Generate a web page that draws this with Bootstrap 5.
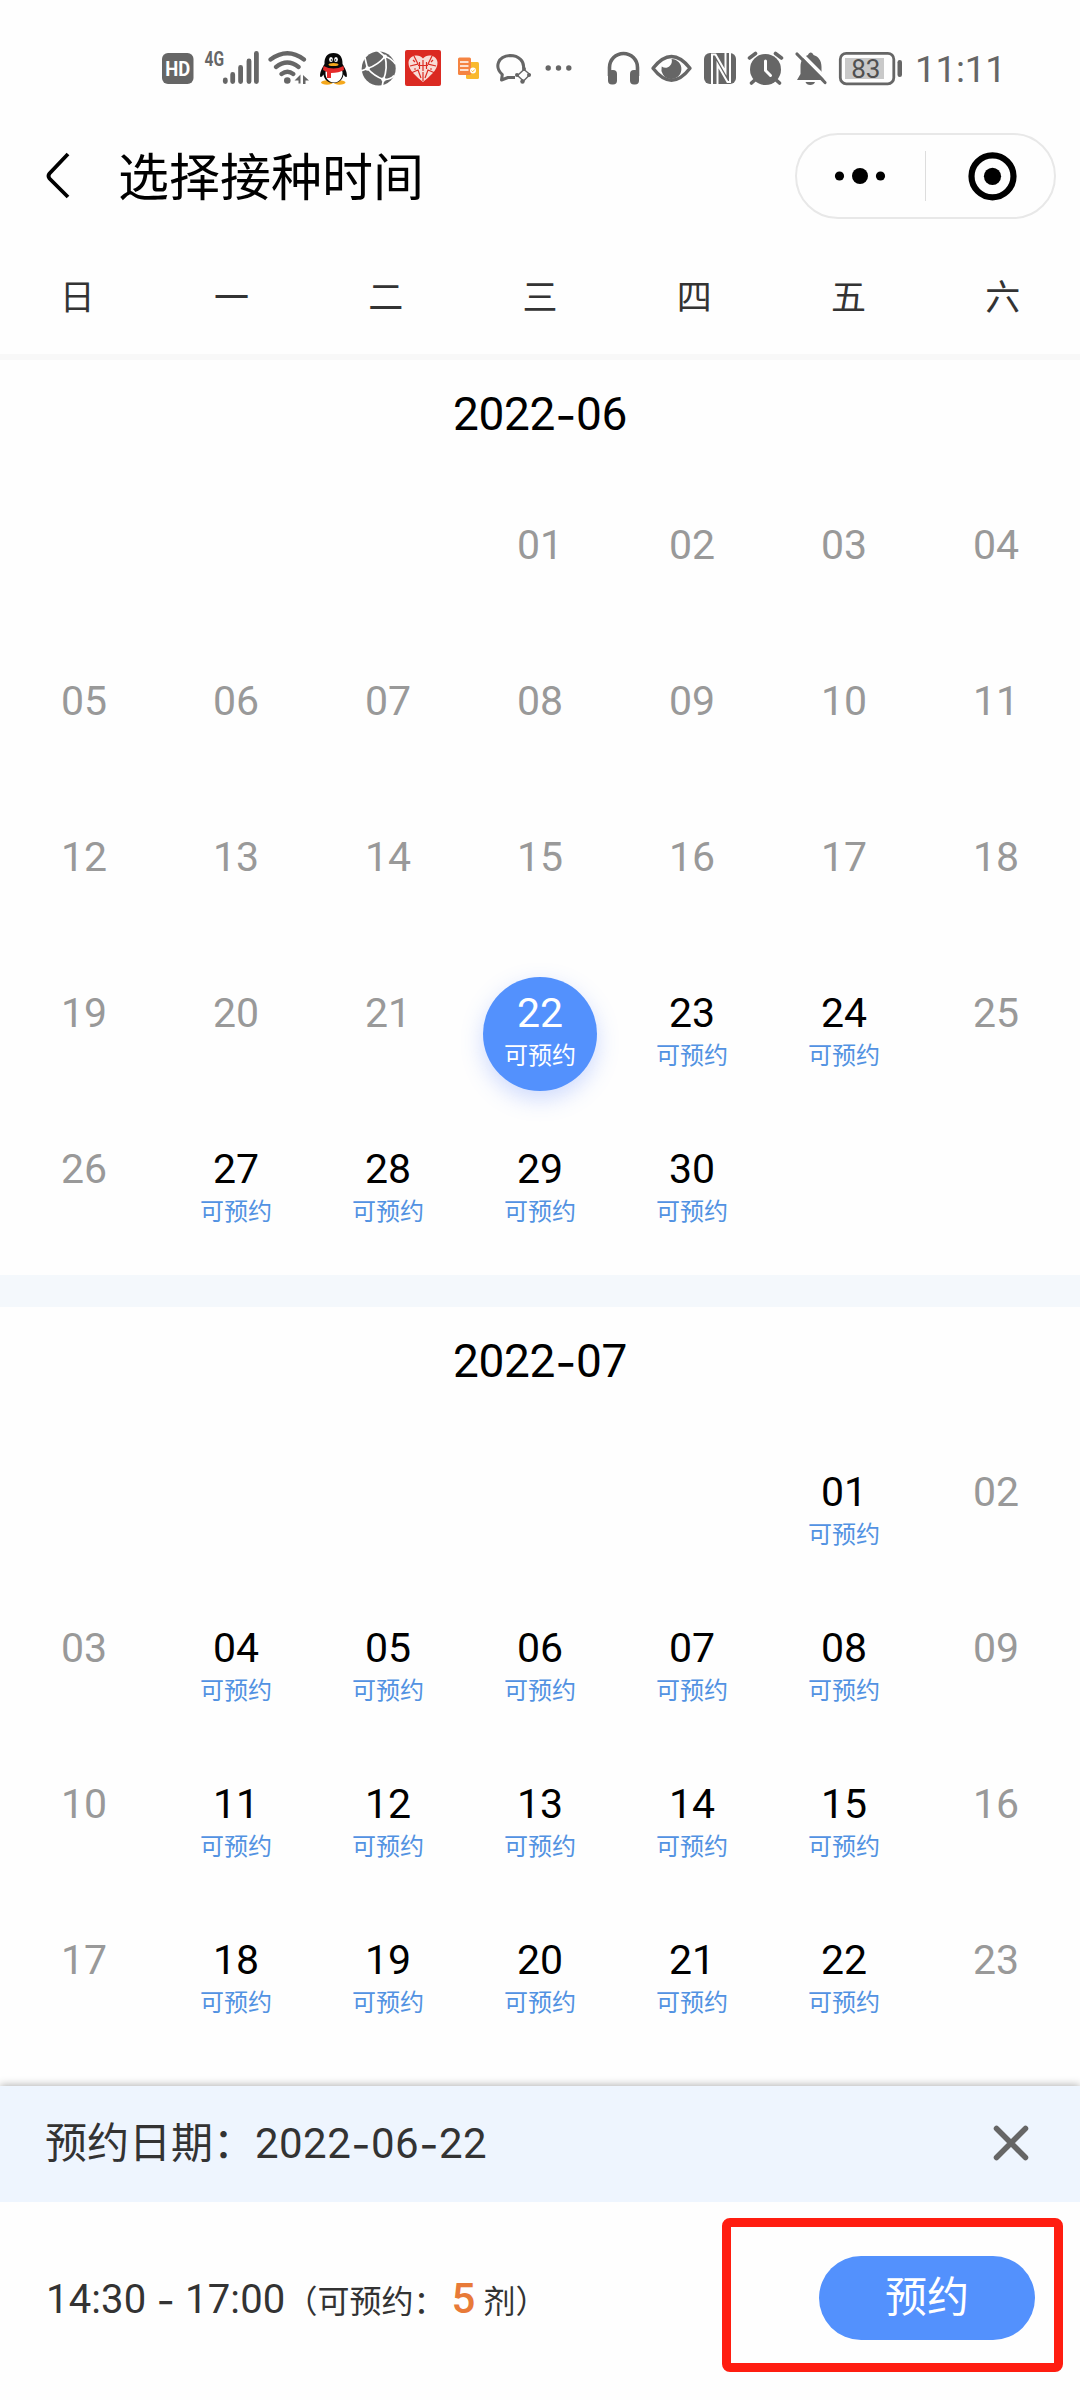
<!DOCTYPE html>
<html lang="zh-CN">
<head>
<meta charset="utf-8">
<meta name="viewport" content="width=device-width, initial-scale=1">
<title>选择接种时间</title>
<link href="https://cdn.jsdelivr.net/npm/bootstrap@5.3.0/dist/css/bootstrap.min.css" rel="stylesheet">
<style>
  body { font-family: Roboto, "Noto Sans CJK SC", sans-serif; color: #000; background: #fefefe; }
  .phone { width: 1080px; height: 2400px; }
  .status { height: 112px; padding: 48px 0 0 160px; color: #666; }
  .status svg { height: 40px; flex: none; }
  .clock { font-size: 37px; line-height: 44px; margin-left: 8px; letter-spacing: -.3px; }
  .titlebar { height: 128px; padding: 0 24px 0 45px; }
  .titlebar h1 { font-size: 51px; line-height: 76px; margin-left: 47px; padding-top: 5px; font-weight: 400; }
  .capsule { width: 261px; height: 86px; border: 2px solid #e8e8e8; border-radius: 43px; }
  .capsule .vr { width: 1px; height: 50px; min-height: 0; align-self: center; background: #ddd; opacity: 1; }
  .week { height: 114px; font-size: 35px; line-height: 117px; color: #333; }
  .seven { grid-template-columns: repeat(7, minmax(0, 1fr)); }
  .rule { height: 6px; background: #f8f8f8; }
  .month { padding: 0 8px 7px; }
  .month h2 { font-size: 46px; line-height: 107px; margin-bottom: 20px; font-weight: 400; letter-spacing: -.3px; }
  .dash { font-family: Inter, sans-serif; position: relative; top: 2px; }
  .gapband { height: 32px; background: #f4f8fc; }
  .day { height: 156px; padding-top: 21px; color: #999; }
  .disc { width: 114px; height: 114px; padding-top: 14px; border-radius: 50%; }
  .num { font-size: 41px; line-height: 44px; }
  .tag { font-size: 24px; line-height: 28px; margin-top: 7px; color: #5292e2; }
  .open { color: #000; }
  .chosen .disc { background: #5391fd; color: #fff; box-shadow: 0 8px 22px rgba(83,125,253,.28); }
  .chosen .tag { color: #fff; }
  .sheet { height: 314px; box-shadow: 0 -1px 8px rgba(0,0,0,.3); color: #333; background: #fefefe; }
  .sheet-head { height: 116px; background: #eef5fe; padding: 0 51px 2px 45px; font-size: 42px; }
  .date { letter-spacing: .45px; }
  .slot { height: 198px; padding: 0 45px 5px 46px; font-size: 40px; letter-spacing: .15px; }
  .note { font-size: 32px; letter-spacing: 0; }
  .left5 { font-size: 42px; font-weight: 500; color: #e87a38; margin: 0 8px 0 6px; }
  .btn-book { width: 216px; height: 84px; font-size: 42px; line-height: 78px; padding: 0; margin-top: -2px; background: #5391fd; color: #fff; border: 0; border-radius: 42px; letter-spacing: 0; }
  .callout { left: 722px; top: 132px; width: 341px; height: 154px; border: 9px solid #ff1d10; border-radius: 8px; pointer-events: none; }
</style>
</head>
<body>
<div class="phone d-flex flex-column overflow-hidden">

  <div class="status d-flex">
    <!-- HD voice -->
    <svg width="40" viewBox="160 48 40 40"><rect x="162" y="53" width="31.5" height="31" rx="6" fill="#666"/><text x="177.8" y="76" text-anchor="middle" font-size="21" font-weight="700" fill="#fff" textLength="25" lengthAdjust="spacingAndGlyphs">HD</text></svg>
    <!-- signal -->
    <svg width="65" viewBox="200 48 65 40"><text x="204.500" y="66" font-size="21" font-weight="700" fill="#666" textLength="19.500" lengthAdjust="spacingAndGlyphs">4G</text><g stroke="#666" stroke-width="4.8" stroke-linecap="round"><path d="M225.3 80v1.5M232.7 74.500v7M240.600 67.500v14M249 61v20.500M256.400 53.500v28"/></g></svg>
    <!-- wifi -->
    <svg width="50" viewBox="265 48 50 40"><g fill="none" stroke="#666" stroke-width="4.200" stroke-linecap="round"><path d="M270.500 59.500q17-12.500 33.500 0M276 67q11.300-9 22.600 0M281.500 74q6-4.500 11.800 0"/></g><circle cx="287.300" cy="80.500" r="3.300" fill="#666"/><path d="M294.500 80.500l6-6v9h-2v-3zM303 75l6 5.500h-3.500v3.500H303z" fill="#666"/></svg>
    <!-- penguin -->
    <svg width="40" viewBox="315 48 40 40"><ellipse cx="327" cy="82.500" rx="6" ry="2.200" fill="#f5a81c"/><ellipse cx="339.500" cy="82.500" rx="6" ry="2.200" fill="#f5a81c"/><path d="M333.500 53c-6.500 0-9.300 4.500-9 11-2.500 4-5 9-4.300 12.500.8 1.500 2.300-.5 3.300-2 .5 5 5 8.500 10 8.500s9.500-3.500 10-8.500c1 1.500 2.500 3.500 3.300 2 .7-3.500-1.800-8.500-4.300-12.500.3-6.500-2.500-11-9-11z" fill="#080808"/><path d="M326 70h16c2 6-2 12.500-8 12.500s-10-6-8-12.500z" fill="#fff"/><path d="M323.500 66q10 5 20 0l.5 4q-5 3-13 3v5h-4v-6l-4-2z" fill="#e52b2b"/><ellipse cx="331" cy="59.500" rx="1.900" ry="2.600" fill="#fff"/><ellipse cx="336" cy="59.500" rx="1.900" ry="2.600" fill="#fff"/><circle cx="331.500" cy="60" r=".8"/><circle cx="335.500" cy="60" r=".8"/><ellipse cx="333.500" cy="64.500" rx="5" ry="1.600" fill="#f5a81c"/></svg>
    <!-- globe -->
    <svg width="47" viewBox="355 48 47 40"><circle cx="378.700" cy="68.500" r="17" fill="#666"/><g fill="none" stroke="#fff" stroke-width="1.700"><path d="M367.500 68.500Q378 65 385 56.500M367.500 68.500Q374 76 383.500 79.500M385 56.500Q388 68 383.500 79.500M385 56.500L377 50M385 56.500Q391 58 395.500 64M383.500 79.500Q390 80 394 75.500M383.500 79.500L382 87M367.500 68.500L361 71M367.500 68.500L365 58"/></g><g fill="#fff"><circle cx="367.500" cy="68.500" r="2.200"/><circle cx="385" cy="56.500" r="2"/><circle cx="383.500" cy="79.500" r="2.200"/></g></svg>
    <!-- shopping app -->
    <svg width="50" viewBox="402 48 50 40"><rect x="405" y="50" width="36" height="36" rx="2" fill="#db2a22"/><path d="M423 58.500c4-5 14-3.500 14.500 4 .5 7.500-8.500 14.500-14.500 19.500-6-5-15-12-14.500-19.500.5-7.500 10.500-9 14.500-4z" fill="#f8dcd7"/><path d="M423 72v9M414 56l4 8-8 2M432 56l-4 8 8 2M411 73l7-3 3 8M435 73l-7-3-3 8M419.500 62v7M423 60v11M426.500 62v7M418 65.500h10M413 60l2 2M433 60l-2 2M414 69h2M430 69h2" fill="none" stroke="#db2a22" stroke-width="1.200"/></svg>
    <!-- documents -->
    <svg width="40" viewBox="452 48 40 40"><rect x="466" y="62" width="13" height="17" rx="1.500" fill="#f9b92e"/><rect x="458" y="57.500" width="13" height="17.500" rx="1.500" fill="#f58442"/><path d="M460 62h8.500M460 66h8.500M460 70h8.500" stroke="#fff" stroke-width="1.300"/><circle cx="473" cy="70.500" r="3" fill="#fff"/><path d="M471.500 70.500l1.200 1.300 2-2.300" stroke="#f9b92e" fill="none"/></svg>
    <!-- chat -->
    <svg width="48" viewBox="492 48 48 40"><path d="M515 77.500h-7l-6.500 2.500.8-5.500C494 67 498 56 510 55.500c9 0 14.500 6 13.500 13" fill="none" stroke="#666" stroke-width="3" stroke-linejoin="round"/><path d="M524 69.500l6 5-6.500 6.500-6-5.500z" fill="none" stroke="#666" stroke-width="1.400"/><g fill="#666"><circle cx="524" cy="69" r="2"/><circle cx="529" cy="75" r="2"/><circle cx="522.500" cy="81.500" r="2.200"/><circle cx="517" cy="75" r="2"/></g></svg>
    <!-- more -->
    <svg width="60" viewBox="540 48 60 40"><g fill="#666"><circle cx="548.200" cy="68" r="2.700"/><circle cx="558.500" cy="68" r="2.700"/><circle cx="568.800" cy="68" r="2.700"/></g></svg>
    <!-- headphones -->
    <svg width="45" viewBox="600 48 45 40"><path d="M609.500 76v-8.500a14 14 0 0 1 28 0V76" fill="none" stroke="#666" stroke-width="3.600"/><rect x="608" y="70" width="9" height="14.500" rx="4" fill="#666"/><rect x="630" y="70" width="9" height="14.500" rx="4" fill="#666"/></svg>
    <!-- eye -->
    <svg width="53" viewBox="645 48 53 40"><path d="M653 68.300q18.500-23.500 37 0q-18.500 24-37 0z" fill="none" stroke="#666" stroke-width="3.400" stroke-linejoin="round"/><path d="M671.500 59a10 10 0 1 1-9.800 7.500c3 2 6 1.500 8-.5 2.500-2.500 2.500-5 1.800-7z" fill="#666"/></svg>
    <!-- NFC -->
    <svg width="44" viewBox="698 48 44 40"><rect x="704" y="53" width="32" height="31" rx="6" fill="#666"/><path d="M712 84V54.500h3.500L725.500 72V53M717.500 84V64.500L727.500 82h2.500V53" fill="none" stroke="#fefefe" stroke-width="2"/></svg>
    <!-- alarm -->
    <svg width="50" viewBox="742 48 50 40"><circle cx="765.500" cy="69.500" r="15.500" fill="#666"/><path d="M749.500 58l6-4.500M781.500 58l-6-4.500M756 79l-4.500 4M775 79l4.500 4" stroke="#666" stroke-width="3.600" stroke-linecap="round"/><path d="M765.500 61v9.500l5 5" fill="none" stroke="#fefefe" stroke-width="3" stroke-linecap="round"/></svg>
    <!-- muted bell -->
    <svg width="43" viewBox="792 48 43 40"><path d="M797 80l3.500-6V67c0-7 3-10.500 7.500-12 1-3.500 4.500-3.500 5.500 0 5 1.500 8 5.500 8 12v7l3 6zM805.500 82h9.500c-1 4-8.500 4-9.500 0z" fill="#666"/><path d="M799.500 52l28 28" stroke="#fefefe" stroke-width="3.500"/><path d="M797 54l28 28.500" stroke="#666" stroke-width="3.200" stroke-linecap="round"/></svg>
    <!-- battery -->
    <svg width="72" viewBox="835 48 72 40"><rect x="840.300" y="53.300" width="53.500" height="30.500" rx="6" fill="none" stroke="#666" stroke-width="2.800"/><rect x="845" y="58" width="39" height="21" fill="#c9c9c9"/><rect x="897.500" y="60" width="4.500" height="17" rx="2.200" fill="#666"/><text x="865.800" y="78" text-anchor="middle" font-size="26" fill="#505050" textLength="29">83</text></svg>
    <span class="clock">11:11</span>
  </div>

  <header class="titlebar d-flex align-items-center">
    <svg width="26" height="48" viewBox="0 0 26 48"><path d="M23 2L4.500 21.500q-2 2.500 0 5L23 45" fill="none" stroke="#000" stroke-width="3.800"/></svg>
    <h1 class="mb-0">选择接种时间</h1>
    <div class="capsule d-flex ms-auto">
      <svg width="128" height="82" viewBox="0 0 128 82"><circle cx="42.500" cy="41" r="4.600"/><circle cx="63" cy="41" r="8"/><circle cx="83.500" cy="41" r="4.600"/></svg>
      <div class="vr"></div>
      <svg width="128" height="82" viewBox="0 0 128 82"><circle cx="66.500" cy="41.300" r="21" fill="none" stroke="#000" stroke-width="6.200"/><circle cx="66.500" cy="41.300" r="8.600"/></svg>
    </div>
  </header>

  <div class="week seven d-grid text-center">
    <div>日</div><div>一</div><div>二</div><div>三</div><div>四</div><div>五</div><div>六</div>
  </div>
  <div class="rule"></div>

  <section class="month">
    <h2 class="text-center">2022<span class="dash">-</span>06</h2>
    <div class="seven d-grid text-center">
      <div class="day"></div><div class="day"></div><div class="day"></div>
      <div class="day"><div class="disc mx-auto"><div class="num">01</div></div></div>
      <div class="day"><div class="disc mx-auto"><div class="num">02</div></div></div>
      <div class="day"><div class="disc mx-auto"><div class="num">03</div></div></div>
      <div class="day"><div class="disc mx-auto"><div class="num">04</div></div></div>

      <div class="day"><div class="disc mx-auto"><div class="num">05</div></div></div>
      <div class="day"><div class="disc mx-auto"><div class="num">06</div></div></div>
      <div class="day"><div class="disc mx-auto"><div class="num">07</div></div></div>
      <div class="day"><div class="disc mx-auto"><div class="num">08</div></div></div>
      <div class="day"><div class="disc mx-auto"><div class="num">09</div></div></div>
      <div class="day"><div class="disc mx-auto"><div class="num">10</div></div></div>
      <div class="day"><div class="disc mx-auto"><div class="num">11</div></div></div>

      <div class="day"><div class="disc mx-auto"><div class="num">12</div></div></div>
      <div class="day"><div class="disc mx-auto"><div class="num">13</div></div></div>
      <div class="day"><div class="disc mx-auto"><div class="num">14</div></div></div>
      <div class="day"><div class="disc mx-auto"><div class="num">15</div></div></div>
      <div class="day"><div class="disc mx-auto"><div class="num">16</div></div></div>
      <div class="day"><div class="disc mx-auto"><div class="num">17</div></div></div>
      <div class="day"><div class="disc mx-auto"><div class="num">18</div></div></div>

      <div class="day"><div class="disc mx-auto"><div class="num">19</div></div></div>
      <div class="day"><div class="disc mx-auto"><div class="num">20</div></div></div>
      <div class="day"><div class="disc mx-auto"><div class="num">21</div></div></div>
      <div class="day chosen"><div class="disc mx-auto"><div class="num">22</div><div class="tag">可预约</div></div></div>
      <div class="day open"><div class="disc mx-auto"><div class="num">23</div><div class="tag">可预约</div></div></div>
      <div class="day open"><div class="disc mx-auto"><div class="num">24</div><div class="tag">可预约</div></div></div>
      <div class="day"><div class="disc mx-auto"><div class="num">25</div></div></div>

      <div class="day"><div class="disc mx-auto"><div class="num">26</div></div></div>
      <div class="day open"><div class="disc mx-auto"><div class="num">27</div><div class="tag">可预约</div></div></div>
      <div class="day open"><div class="disc mx-auto"><div class="num">28</div><div class="tag">可预约</div></div></div>
      <div class="day open"><div class="disc mx-auto"><div class="num">29</div><div class="tag">可预约</div></div></div>
      <div class="day open"><div class="disc mx-auto"><div class="num">30</div><div class="tag">可预约</div></div></div>
    </div>
  </section>
  <div class="gapband"></div>

  <section class="month">
    <h2 class="text-center">2022<span class="dash">-</span>07</h2>
    <div class="seven d-grid text-center">
      <div class="day"></div><div class="day"></div><div class="day"></div><div class="day"></div><div class="day"></div>
      <div class="day open"><div class="disc mx-auto"><div class="num">01</div><div class="tag">可预约</div></div></div>
      <div class="day"><div class="disc mx-auto"><div class="num">02</div></div></div>

      <div class="day"><div class="disc mx-auto"><div class="num">03</div></div></div>
      <div class="day open"><div class="disc mx-auto"><div class="num">04</div><div class="tag">可预约</div></div></div>
      <div class="day open"><div class="disc mx-auto"><div class="num">05</div><div class="tag">可预约</div></div></div>
      <div class="day open"><div class="disc mx-auto"><div class="num">06</div><div class="tag">可预约</div></div></div>
      <div class="day open"><div class="disc mx-auto"><div class="num">07</div><div class="tag">可预约</div></div></div>
      <div class="day open"><div class="disc mx-auto"><div class="num">08</div><div class="tag">可预约</div></div></div>
      <div class="day"><div class="disc mx-auto"><div class="num">09</div></div></div>

      <div class="day"><div class="disc mx-auto"><div class="num">10</div></div></div>
      <div class="day open"><div class="disc mx-auto"><div class="num">11</div><div class="tag">可预约</div></div></div>
      <div class="day open"><div class="disc mx-auto"><div class="num">12</div><div class="tag">可预约</div></div></div>
      <div class="day open"><div class="disc mx-auto"><div class="num">13</div><div class="tag">可预约</div></div></div>
      <div class="day open"><div class="disc mx-auto"><div class="num">14</div><div class="tag">可预约</div></div></div>
      <div class="day open"><div class="disc mx-auto"><div class="num">15</div><div class="tag">可预约</div></div></div>
      <div class="day"><div class="disc mx-auto"><div class="num">16</div></div></div>

      <div class="day"><div class="disc mx-auto"><div class="num">17</div></div></div>
      <div class="day open"><div class="disc mx-auto"><div class="num">18</div><div class="tag">可预约</div></div></div>
      <div class="day open"><div class="disc mx-auto"><div class="num">19</div><div class="tag">可预约</div></div></div>
      <div class="day open"><div class="disc mx-auto"><div class="num">20</div><div class="tag">可预约</div></div></div>
      <div class="day open"><div class="disc mx-auto"><div class="num">21</div><div class="tag">可预约</div></div></div>
      <div class="day open"><div class="disc mx-auto"><div class="num">22</div><div class="tag">可预约</div></div></div>
      <div class="day"><div class="disc mx-auto"><div class="num">23</div></div></div>
    </div>
  </section>

  <div class="sheet mt-auto position-relative">
    <div class="sheet-head d-flex align-items-center justify-content-between">
      <div>预约日期：<span class="date">2022<span class="dash">-</span>06<span class="dash">-</span>22</span></div>
      <svg width="36" height="36" viewBox="0 0 36 36"><path d="M3.500 3.500l29 29M32.500 3.500l-29 29" stroke="#666" stroke-width="5.500" stroke-linecap="round"/></svg>
    </div>
    <div class="slot d-flex align-items-center justify-content-between">
      <div class="d-flex align-items-baseline">
        <span>14:30 <span class="dash">-</span> 17:00</span>
        <span class="note">（可预约：</span><span class="left5">5</span><span class="note">剂）</span>
      </div>
      <button type="button" class="btn btn-book">预约</button>
    </div>
    <div class="callout position-absolute"></div>
  </div>
</div>
<script src="https://cdn.jsdelivr.net/npm/bootstrap@5.3.0/dist/js/bootstrap.bundle.min.js"></script>
</body>
</html>
